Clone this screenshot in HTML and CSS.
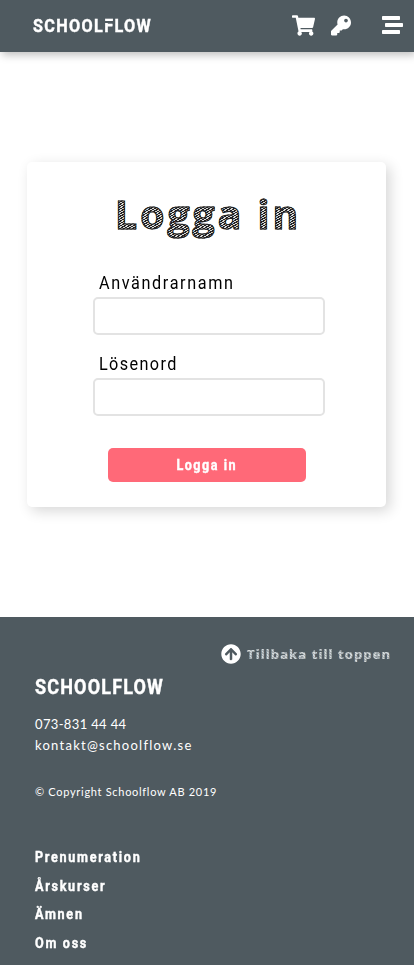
FILE: index.html
```html
<!DOCTYPE html>
<html lang="sv">
<head>
<meta charset="utf-8">
<title>Schoolflow</title>
<link rel="stylesheet" href="styles.css">
</head>
<body>
<header class="topbar">
  <a class="logo">SCHOOL<span class="cut">F</span>LOW</a>
  <nav class="tools">
    <svg class="cart" viewBox="0 0 576 512"><path d="M528.12 301.319l47.273-208C578.806 78.301 567.391 64 551.99 64H159.208l-9.166-44.81C147.758 8.021 137.93 0 126.529 0H24C10.745 0 0 10.745 0 24v16c0 13.255 10.745 24 24 24h69.883l70.248 343.435C147.325 417.1 136 435.222 136 456c0 30.928 25.072 56 56 56s56-25.072 56-56c0-15.674-6.447-29.835-16.824-40h209.647C430.447 426.165 424 440.326 424 456c0 30.928 25.072 56 56 56s56-25.072 56-56c0-22.172-12.888-41.332-31.579-50.405l5.517-24.276c3.413-15.018-8.002-29.319-23.403-29.319H218.117l-6.545-32h293.145c11.206 0 20.92-7.754 23.403-18.681z"/></svg>
    <svg class="key" viewBox="0 0 512 512"><path d="M512 176.001C512 273.203 433.202 352 336 352c-11.22 0-22.19-1.062-32.827-3.069l-24.012 27.014A23.999 23.999 0 0 1 261.223 384H224v40c0 13.255-10.745 24-24 24h-40v40c0 13.255-10.745 24-24 24H24c-13.255 0-24-10.745-24-24v-78.059c0-6.365 2.529-12.47 7.029-16.971l161.802-161.802C163.108 213.814 160 195.271 160 176 160 78.798 238.797.001 335.999 0 433.488-.001 512 78.511 512 176.001zM336 128c0 26.51 21.49 48 48 48s48-21.49 48-48-21.49-48-48-48-48 21.49-48 48z"/></svg>
    <svg class="menu" viewBox="0 0 21 18"><rect width="18" height="4" rx=".7"/><rect x="3" y="7" width="18" height="4" rx=".7"/><rect y="14" width="18" height="4" rx=".7"/></svg>
  </nav>
</header>
<main>
  <form class="card">
    <h1>Logga in</h1>
    <label class="user" for="user">Användrarnamn</label>
    <input id="user" type="text">
    <label class="pass" for="pass">Lösenord</label>
    <input id="pass" type="password">
    <button type="button"><span>Logga in</span></button>
  </form>
</main>
<footer>
  <a class="totop">
    <svg viewBox="0 0 512 512"><path d="M8 256C8 119 119 8 256 8s248 111 248 248-111 248-248 248S8 393 8 256zm143.600 28.900l72.400-75.500V392c0 13.300 10.700 24 24 24h16c13.300 0 24-10.700 24-24V209.400l72.400 75.500c9.300 9.700 24.800 9.900 34.300.4l10.900-11c9.400-9.400 9.400-24.600 0-33.900L273 107.700c-9.400-9.400-24.600-9.400-33.900 0L106.300 240.400c-9.400 9.400-9.400 24.600 0 33.900l10.900 11c9.600 9.500 25.100 9.300 34.400-.4z"/></svg>
    <span>Tillbaka till toppen</span>
  </a>
  <h2>SCHOOLFLOW</h2>
  <p class="phone">073-831 44 44</p>
  <p class="mail">kontakt@schoolflow.se</p>
  <p class="copy">© Copyright Schoolflow AB 2019</p>
  <ul>
    <li><a>Prenumeration</a></li>
    <li><a>Årskurser</a></li>
    <li><a>Ämnen</a></li>
    <li><a>Om oss</a></li>
  </ul>
</footer>
</body>
</html>
```
FILE: styles.css
```css
* { box-sizing: border-box; }
body {
  margin: 0;
  height: 965px;
  overflow: hidden;
  background: #fff;
  font-family: Roboto, sans-serif;
}
.topbar {
  height: 52px;
  display: flex;
  align-items: center;
  justify-content: space-between;
  padding: 0 11px 0 33px;
  background: #4f5a60;
  box-shadow: 2px 3px 8px rgba(0, 0, 0, .25);
}
/* Narrow, widely tracked lettering */
.logo, h2, label, li a, button span {
  transform: scaleX(.9);
  transform-origin: left center;
}
.logo, h2, li a, button span { -webkit-text-stroke: .4px #fff; }
.logo {
  color: #fff;
  font-size: 18px;
  line-height: 26px;
  font-weight: 700;
  letter-spacing: 1.5px;
}
.cut { position: relative; }
.cut::after {
  content: "";
  position: absolute;
  left: 0;
  top: 6px;
  width: 12px;
  height: 2px;
  background: #4f5a60;
}
.tools { display: flex; align-items: center; height: 50px; margin-bottom: 2px; }
svg { fill: #fff; display: block; }
.cart { width: 23px; height: 21px; margin-right: 16px; }
.key { width: 20px; height: 21px; margin-right: 31px; }
.menu { width: 21px; height: 18px; }

main { height: 565px; padding: 110px 28px 0 27px; }
.card {
  height: 345px;
  padding: 30px 61px 0 66px;
  border-radius: 5px;
  background: #fff;
  box-shadow: 4px 4px 14px rgba(0, 0, 0, .16);
}
h1 {
  margin: 0 -40px 0 22px;
  height: 50px;
  font: 700 39px/44px "Open Sans", sans-serif;
  letter-spacing: 3.1px;
  white-space: nowrap;
  color: transparent;
  -webkit-text-stroke: 1.1px #222;
  background: repeating-linear-gradient(150deg, #222 0 1.1px, #d8d8d8 1.1px 2.1px);
  -webkit-background-clip: text;
  background-clip: text;
}
label {
  display: block;
  height: 28px;
  margin-left: 6px;
  font-size: 18px;
  line-height: 28px;
  color: #000;
}
.user { margin-top: 27px; letter-spacing: 1.8px; }
.pass { margin-top: 15px; letter-spacing: 1.55px; }
input {
  display: block;
  width: 232px;
  height: 38px;
  padding: 0 8px;
  border: 2px solid #e3e3e3;
  border-radius: 5px;
  background: #fff;
}
button {
  display: block;
  width: 198px;
  height: 34px;
  margin: 32px 0 0 15px;
  padding: 0;
  border: 0;
  border-radius: 5px;
  background: #ff6978;
  color: #fff;
  font: 700 14px/34px Roboto, sans-serif;
  letter-spacing: 1.7px;
}
button span { display: inline-block; transform-origin: center; }

footer {
  height: 348px;
  padding: 26px 23px 0 35px;
  background: #4f5a60;
  color: #fff;
}
.totop { display: flex; justify-content: flex-end; align-items: center; height: 21px; }
.totop svg { width: 20px; height: 20px; margin-right: 6px; }
.totop span {
  width: 144px;
  white-space: nowrap;
  font: 700 13px/18px "Open Sans", sans-serif;
  letter-spacing: 1.1px;
  color: transparent;
  -webkit-text-stroke: .2px #c5cbce;
  background: repeating-linear-gradient(35deg, #d5dadc 0 1.2px, #a5adb1 1.2px 2.2px);
  -webkit-background-clip: text;
  background-clip: text;
}
h2 { margin: 10px 0 0; font-size: 20px; line-height: 27px; letter-spacing: 1.3px; }
p { margin: 0; font-family: Lato, sans-serif; white-space: nowrap; }
.phone { margin-top: 13px; font-size: 13px; line-height: 21px; letter-spacing: .35px; }
.mail { font-size: 13px; line-height: 21px; letter-spacing: 1.25px; }
.copy { margin-top: 25px; font-size: 11px; line-height: 21px; letter-spacing: .7px; }
ul { margin: 41px 0 0; padding: 0; list-style: none; }
li { height: 28.700px; font-size: 14px; font-weight: 700; line-height: 29px; letter-spacing: 1.9px; }
li a { display: block; }
```
